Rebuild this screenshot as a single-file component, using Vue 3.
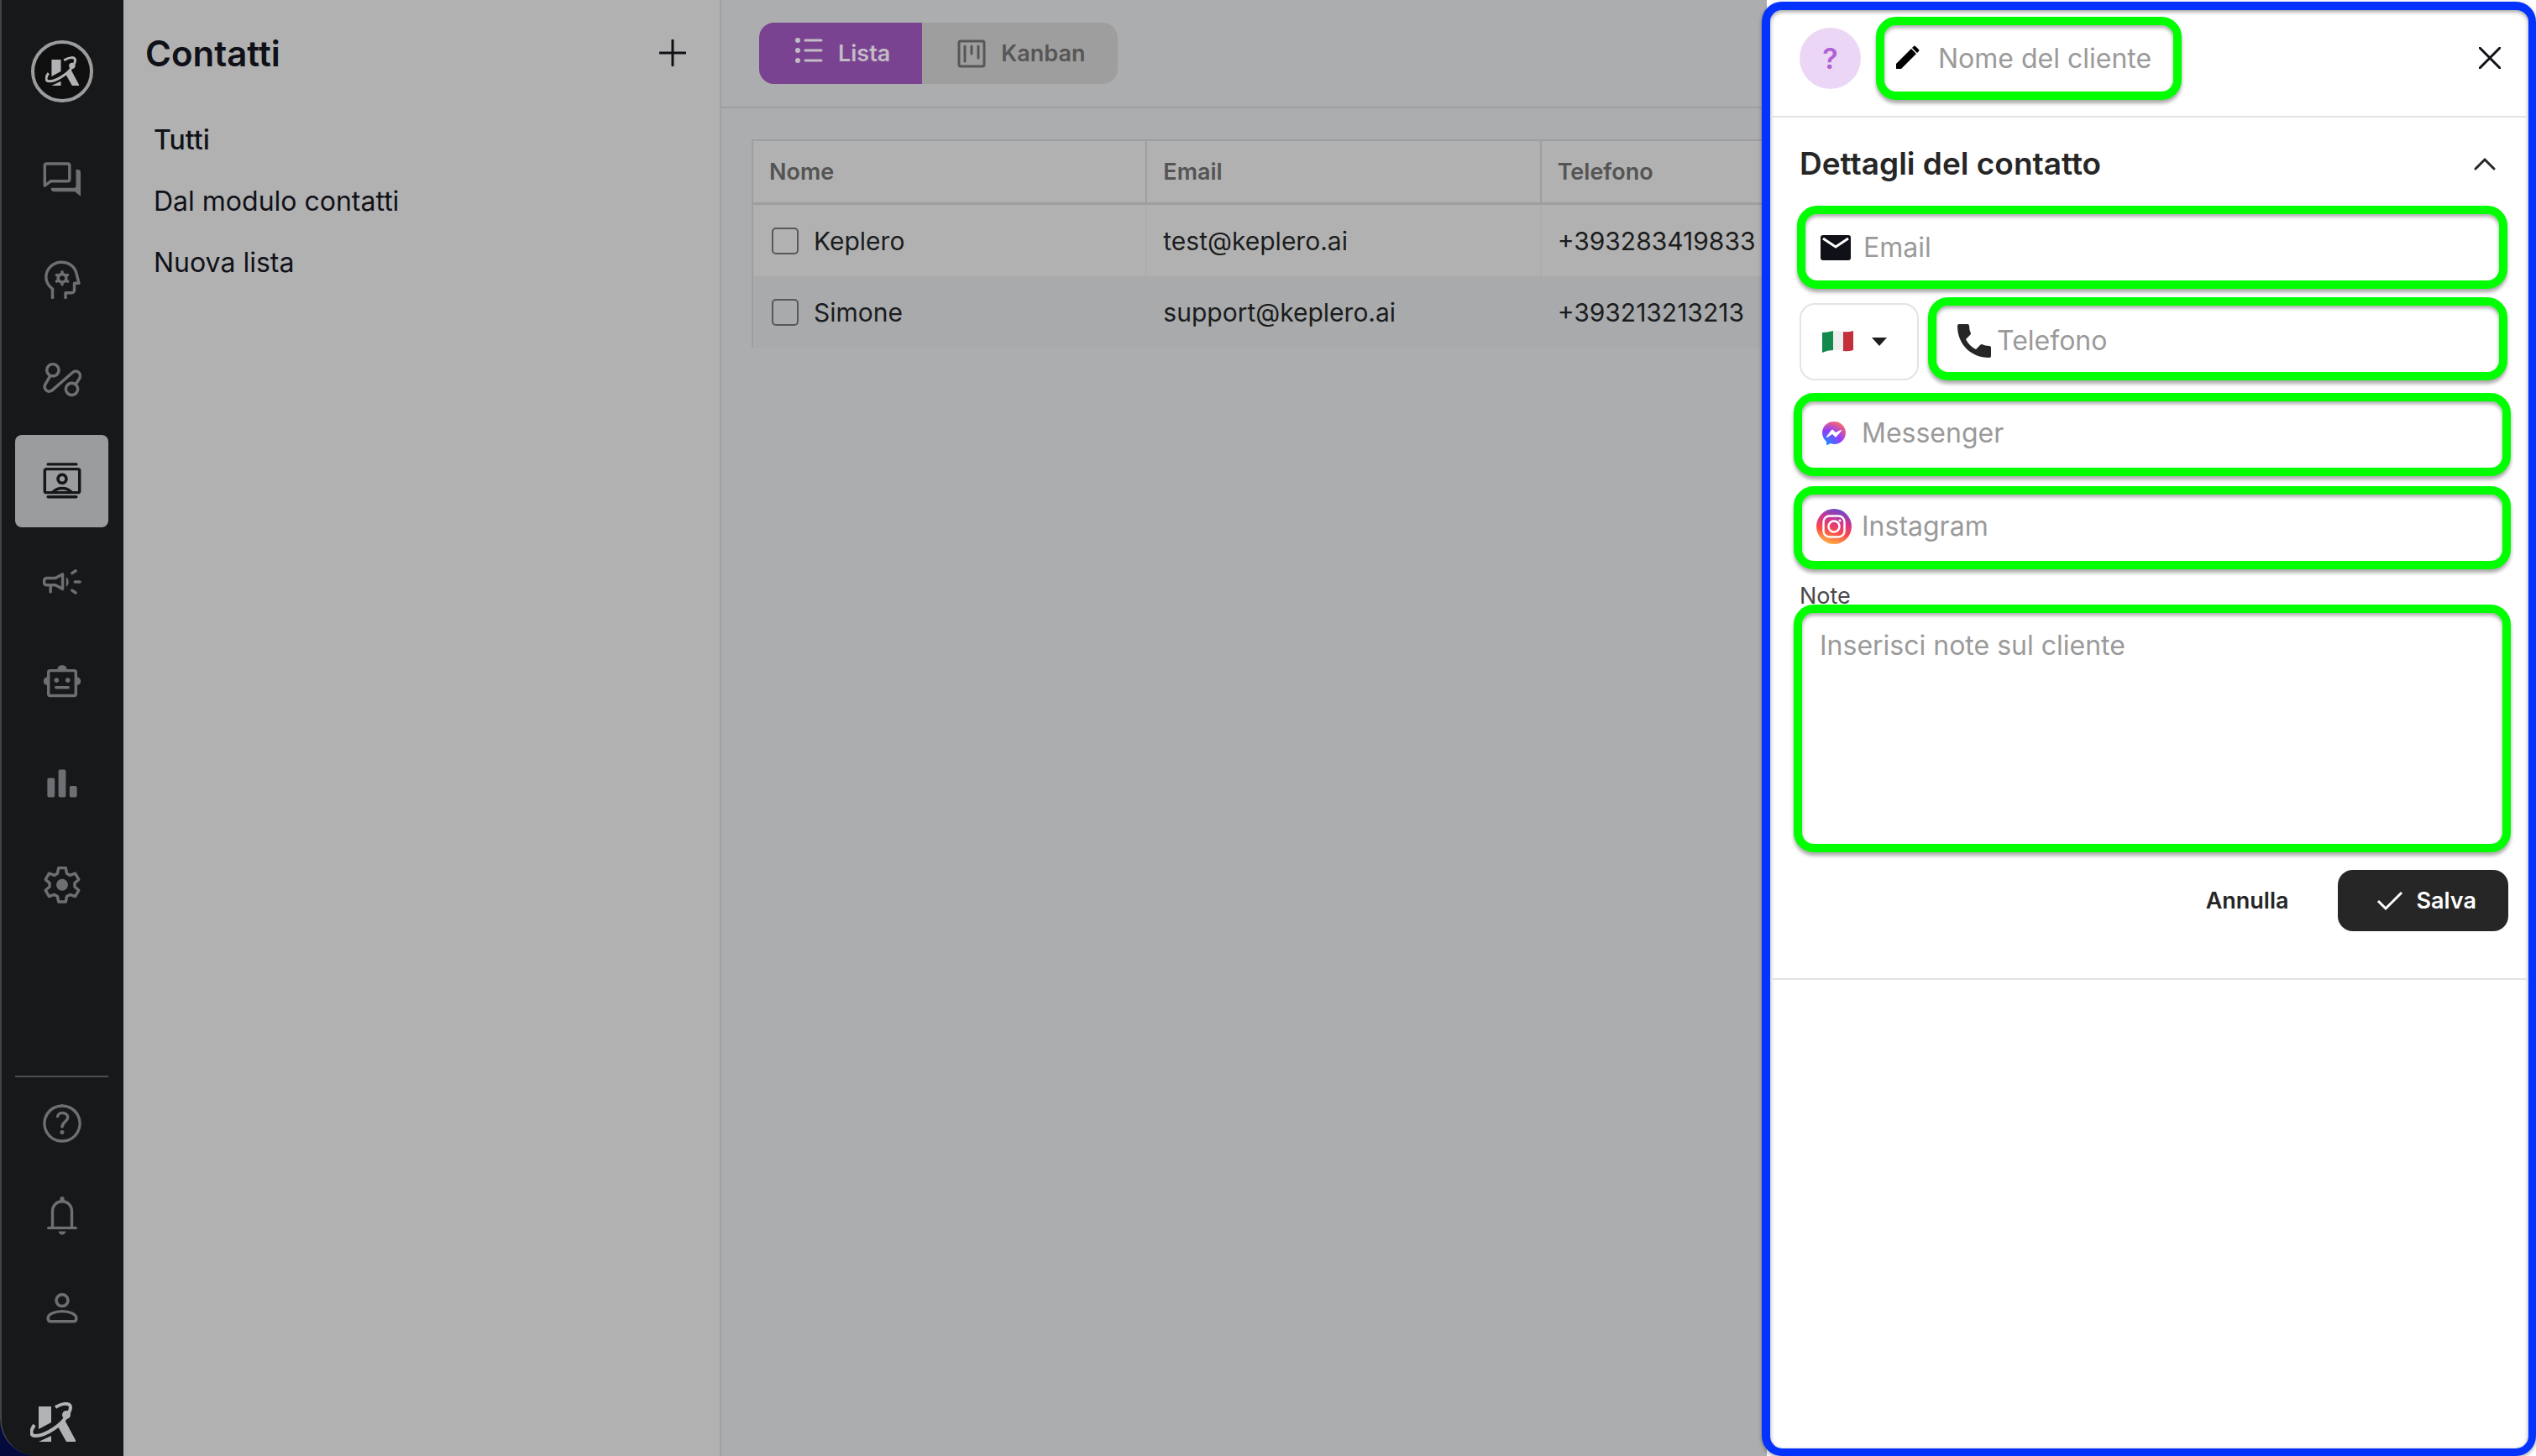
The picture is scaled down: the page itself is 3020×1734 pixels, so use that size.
<script setup>
import { ref } from 'vue';

const view = ref('list');
const country = ref('IT');

const contact = ref({
    name: '',
    email: '',
    phone: '',
    messenger: '',
    instagram: '',
    notes: ''
});

const navItems = [
    { id: 'chat', label: 'Conversazioni' },
    { id: 'brain', label: 'Conoscenza' },
    { id: 'flow', label: 'Flussi' },
    { id: 'contacts', label: 'Contatti', active: true },
    { id: 'campaign', label: 'Campagne' },
    { id: 'robot', label: 'Chatbot' },
    { id: 'chart', label: 'Statistiche' },
    { id: 'settings', label: 'Impostazioni' }
];

const bottomItems = [
    { id: 'help', label: 'Aiuto' },
    { id: 'bell', label: 'Notifiche' },
    { id: 'person', label: 'Profilo' }
];

const lists = ['Tutti', 'Dal modulo contatti', 'Nuova lista'];

const contacts = [
    { name: 'Keplero', email: 'test@keplero.ai', phone: '+393283419833' },
    { name: 'Simone', email: 'support@keplero.ai', phone: '+393213213213' }
];

// 24x24 stroke icons, a filled part is listed under "fill"
const icons = {
    chat: {
        stroke: 'M2.2 2.6h13.4a1 1 0 0 1 1 1v8.800a1 1 0 0 1-1 1H5L1.200 16.200V3.600a1 1 0 0 1 1-1z',
        fill: 'M20.600 6.200h1.200c1 0 1.700.700 1.700 1.700v14.900l-3.600-2.800H7c-1.200 0-2-.8-2-2.400h14.600a1 1 0 0 0 1-1z'
    },
    brain: {
        stroke: 'M6 23.200v-5.400C3.500 15.800 2 13.300 2 10.400 2 5.300 6.200 1.200 11.600 1.200c4.700 0 8.300 2.800 9.300 7l1.500 6h-2.800v4.400a1.600 1.600 0 0 1-1.600 1.600h-3.900v3M12 7.200v1.400M12 13.600v1.400M8.600 9.100l1.200.7M14.200 12.400l1.200.7M8.600 13.100l1.200-.7M14.200 9.800l1.200-.7M12 8.600a2.500 2.500 0 1 0 .01 0'
    },
    flow: {
        stroke: 'M6.200 1.900a3.700 3.700 0 1 0 .01 0M18 13.700a3.700 3.700 0 1 0 .01 0M4.600 9.200l-2.900 5c-1.700 2.800.9 5.900 3.900 4.100L18.700 6.900c2.800-1.900 5.600 1.200 4 4l-2 3.200'
    },
    contacts: {
        stroke: 'M3.200 1.500h17.600M3.200 21.800h17.600M2.200 4.500h19.600a1 1 0 0 1 1 1v12.600a1 1 0 0 1-1 1H2.200a1 1 0 0 1-1-1V5.500a1 1 0 0 1 1-1zM12 8a2.600 2.600 0 1 0 .01 0M6.300 18.800c2.900-3.200 8.500-3.200 11.400 0'
    },
    campaign: {
        stroke: 'M2.300 9.700h5.500l4.500-2.500v9.200l-4.500-2.400H2.300a1.500 1.500 0 0 1-1.500-1.500v-1.300a1.500 1.500 0 0 1 1.500-1.500zM4.800 14.200v4M18.200 6.600l2.200-1.500M20 12h3M18.200 17.300l2.200 1.500',
        fill: 'M14.500 9c2 1 2 5 0 6z'
    },
    robot: {
        stroke: 'M4.500 4.500h15a1 1 0 0 1 1 1v13.600a1 1 0 0 1-1 1h-15a1 1 0 0 1-1-1V5.500a1 1 0 0 1 1-1zM8.200 15h7.600',
        fill: 'M9 4a3 3 0 0 1 6 0zM3 8.500v5.200a2.600 2.600 0 0 1 0-5.200zM21 8.500v5.200a2.600 2.600 0 0 0 0-5.200zM8.500 9a1.500 1.500 0 1 0 .01 0M15.500 9a1.500 1.500 0 1 0 .01 0'
    },
    chart: {
        fill: 'M3.800 8.600h2.600a1 1 0 0 1 1 1v10a1 1 0 0 1-1 1H3.800a1 1 0 0 1-1-1v-10a1 1 0 0 1 1-1zM10.700 3.400h2.600a1 1 0 0 1 1 1v15.200a1 1 0 0 1-1 1h-2.600a1 1 0 0 1-1-1V4.400a1 1 0 0 1 1-1zM17.600 13.600h2.600a1 1 0 0 1 1 1v5a1 1 0 0 1-1 1h-2.600a1 1 0 0 1-1-1v-5a1 1 0 0 1 1-1z'
    },
    settings: {
        stroke: 'M9.800 1.900h4.400l.7 3.400 2 1.200 3.200-1.200 2.200 3.800-2.500 2.200v2.300l2.500 2.200-2.200 3.800-3.200-1.100-2 1.100-.7 3.400H9.800l-.7-3.400-2-1.100-3.200 1.100-2.200-3.800 2.500-2.200v-2.300L1.700 9.100l2.200-3.800 3.200 1.200 2-1.200z',
        fill: 'M12 8.800a3.600 3.600 0 1 0 .01 0'
    },
    help: {
        stroke: 'M12 1a11 11 0 1 0 .01 0M9.200 7.600c.6-3.400 6.600-2.600 6.300.8-.2 2.400-3.300 2.600-3.500 5.600',
        fill: 'M12 16.200a1.300 1.300 0 1 0 .01 0'
    },
    bell: {
        stroke: 'M3.500 19.500h17M6 19V9.300C6 5.600 8.500 3 12 3s6 2.600 6 6.300V19',
        fill: 'M10.600 2.900V1.500c0-2 2.800-2 2.800 0v1.400zM9.700 21.700h4.600c-.5 2.800-4.100 2.800-4.600 0z'
    },
    person: {
        stroke: 'M12 3.500a3.600 3.600 0 1 0 .01 0M5 20.200h14c1.300 0 1.800-.6 1.800-2 0-2.400-4-4.300-8.800-4.300s-8.800 1.900-8.800 4.300c0 1.400.5 2 1.800 2z'
    }
};
</script>

<template>
    <div class="app">
        <nav class="rail" aria-label="Menu principale">
            <a href="#" class="brand" aria-label="Keplero">
                <svg viewBox="0 0 54 48">
                    <path d="M10 5h15v19L10 32zM25 40v7H10zM33 29l8-8 14 26H43z" />
                    <path class="orbit" d="M5 27c-5 7-5 13 1 13 13 0 33-14 39-26M30 6c8-5 18-6 18 0 0 3-1 5-3 8" />
                    <circle cx="43" cy="15" r="5" />
                </svg>
            </a>
            <div class="nav-group">
                <a v-for="item in navItems" :key="item.id" href="#" class="nav-item" :class="{ active: item.active }" :aria-label="item.label">
                    <svg class="icon" viewBox="0 0 24 24">
                        <path v-if="icons[item.id].stroke" class="line" :d="icons[item.id].stroke" />
                        <path v-if="icons[item.id].fill" class="solid" :d="icons[item.id].fill" />
                    </svg>
                </a>
            </div>
            <div class="nav-bottom">
                <a v-for="item in bottomItems" :key="item.id" href="#" class="nav-item" :aria-label="item.label">
                    <svg class="icon" viewBox="0 0 24 24">
                        <path class="line" :d="icons[item.id].stroke" />
                        <path v-if="icons[item.id].fill" class="solid" :d="icons[item.id].fill" />
                    </svg>
                </a>
                <svg class="mark" viewBox="0 0 54 48">
                    <path d="M10 5h15v19L10 32zM25 40v7H10zM33 29l8-8 14 26H43z" />
                    <path class="orbit" d="M5 27c-5 7-5 13 1 13 13 0 33-14 39-26M30 6c8-5 18-6 18 0 0 3-1 5-3 8" />
                    <circle cx="43" cy="15" r="5" />
                </svg>
            </div>
        </nav>

        <section class="lists">
            <header class="lists-head">
                <h1>Contatti</h1>
                <button type="button" class="icon-btn" aria-label="Aggiungi lista">
                    <svg width="32" height="32" viewBox="0 0 32 32"><path d="M16 1v30M1 16h30" /></svg>
                </button>
            </header>
            <a v-for="(list, index) in lists" :key="list" href="#" class="list-link" :class="{ current: index === 0 }">{{ list }}</a>
        </section>

        <main class="content">
            <div class="toolbar">
                <div class="toggle">
                    <button type="button" :class="{ on: view === 'list' }" @click="view = 'list'">
                        <svg class="list-icon" width="34" height="34" viewBox="0 0 34 34">
                            <path d="M13 5h19M13 17h19M13 29h19" />
                            <circle cx="4" cy="5" r="3" />
                            <circle cx="4" cy="17" r="3" />
                            <circle cx="4" cy="29" r="3" />
                        </svg>
                        Lista
                    </button>
                    <button type="button" :class="{ on: view === 'kanban' }" @click="view = 'kanban'">
                        <svg width="34" height="34" viewBox="0 0 34 34">
                            <rect x="2" y="2" width="30" height="30" rx="2" />
                            <path d="M9 8v18M17 8v9M25 8v14" />
                        </svg>
                        Kanban
                    </button>
                </div>
            </div>
            <table class="contacts">
                <thead>
                    <tr>
                        <th>Nome</th>
                        <th>Email</th>
                        <th>Telefono</th>
                    </tr>
                </thead>
                <tbody>
                    <tr v-for="row in contacts" :key="row.email">
                        <td>
                            <label class="pick"><input type="checkbox" />{{ row.name }}</label>
                        </td>
                        <td>{{ row.email }}</td>
                        <td>{{ row.phone }}</td>
                    </tr>
                </tbody>
            </table>
        </main>

        <aside class="drawer">
            <div class="frame">
                <header class="drawer-head">
                    <span class="avatar">?</span>
                    <label class="field name-field">
                        <svg width="30" height="30" viewBox="0 0 30 30">
                            <path d="M2 28v-6L20 4l6 6L8 28zM21 3l2-2q1-1 2 0l4 4q1 1 0 2l-2 2z" />
                        </svg>
                        <input v-model="contact.name" type="text" placeholder="Nome del cliente" aria-label="Nome del cliente" />
                    </label>
                    <button type="button" class="icon-btn close" aria-label="Chiudi">
                        <svg width="26" height="26" viewBox="0 0 26 26"><path d="M1 1l24 24M25 1L1 25" /></svg>
                    </button>
                </header>

                <form class="details" @submit.prevent>
                    <div class="details-head">
                        <h2>Dettagli del contatto</h2>
                        <button type="button" class="icon-btn" aria-label="Comprimi">
                            <svg width="26" height="16" viewBox="0 0 26 16"><path d="M2 14L13 3l11 11" /></svg>
                        </button>
                    </div>

                    <label class="field inset">
                        <svg width="42" height="42" viewBox="0 0 42 42">
                            <rect x="3" y="6" width="36" height="30" rx="3" fill="#101118" />
                            <path d="M6 10l15 10 15-10" fill="none" stroke="#ffffff" stroke-width="3" />
                        </svg>
                        <input v-model="contact.email" type="email" placeholder="Email" aria-label="Email" />
                    </label>

                    <div class="phone-row">
                        <div class="country">
                            <svg width="38" height="28" viewBox="0 0 38 28">
                                <path fill="#128a4b" d="M0 3q6 0 13-2v23q-7 0-13 3z" />
                                <path fill="#eeeeee" d="M13 1q6-1 12 1v23q-6-2-12-1z" />
                                <path fill="#c32f3b" d="M25 2q6 1 12-1v23q-6 2-12 1z" />
                            </svg>
                            <svg width="20" height="10" viewBox="0 0 20 10"><path fill="#1d1d1d" d="M1 0h18l-9 10z" /></svg>
                            <select v-model="country" aria-label="Prefisso">
                                <option value="IT">Italia +39</option>
                            </select>
                        </div>
                        <label class="field phone">
                            <svg width="42" height="42" viewBox="0 0 42 42">
                                <path fill="#262626" d="M3 1h10q2 0 2 2 0 5 2 9 0 1-1 2l-5 5q4 8 12 12l5-5q1-1 2-1 4 2 9 2 2 0 2 2v10q0 2-2 2C17 41 1 25 1 3q0-2 2-2z" />
                            </svg>
                            <input v-model="contact.phone" type="tel" placeholder="Telefono" aria-label="Telefono" />
                        </label>
                    </div>

                    <label class="field social">
                        <svg width="42" height="42" viewBox="0 0 42 42">
                            <defs>
                                <radialGradient id="messenger" cx="0.2" cy="1" r="1.1">
                                    <stop offset="0" stop-color="#1292ff" />
                                    <stop offset="0.55" stop-color="#8f3dff" />
                                    <stop offset="1" stop-color="#ff6a68" />
                                </radialGradient>
                            </defs>
                            <path fill="url(#messenger)" d="M21 7c8 0 14 6 14 13.500S29 34 21 34q-2 0-4-1l-4 2q-1 0-1-1v-3c-3-3-5-6-5-10.500C7 13 13 7 21 7z" />
                            <path fill="#ffffff" d="M12 25l6-8q1-1 2 0l3 3 6-3q1 0 1 1l-6 7q-1 1-2 0l-3-3-6 4q-1 0-1-1z" />
                        </svg>
                        <input v-model="contact.messenger" type="text" placeholder="Messenger" aria-label="Messenger" />
                    </label>

                    <label class="field social">
                        <svg width="42" height="42" viewBox="0 0 42 42">
                            <defs>
                                <linearGradient id="instagram" x1="0.35" y1="1" x2="0.65" y2="0">
                                    <stop offset="0" stop-color="#ffb545" />
                                    <stop offset="0.35" stop-color="#fb4a48" />
                                    <stop offset="0.65" stop-color="#d6348c" />
                                    <stop offset="1" stop-color="#6449cf" />
                                </linearGradient>
                            </defs>
                            <circle cx="21" cy="21" r="21" fill="url(#instagram)" />
                            <g fill="none" stroke="#ffffff" stroke-width="2.5">
                                <rect x="8.5" y="8.5" width="25" height="25" rx="7" />
                                <circle cx="21" cy="21" r="6.5" />
                            </g>
                            <circle cx="28" cy="14" r="1.6" fill="#ffffff" />
                        </svg>
                        <input v-model="contact.instagram" type="text" placeholder="Instagram" aria-label="Instagram" />
                    </label>

                    <div class="notes">
                        <label for="notes">Note</label>
                        <textarea id="notes" v-model="contact.notes" placeholder="Inserisci note sul cliente"></textarea>
                    </div>

                    <div class="actions">
                        <button type="button" class="cancel">Annulla</button>
                        <button type="submit" class="save">
                            <svg width="32" height="24" viewBox="0 0 32 24"><path d="M2 12l9 9L30 2" /></svg>
                            Salva
                        </button>
                    </div>
                </form>
            </div>
        </aside>
    </div>
</template>

<style>
body {
    background: #030a3c;
}
</style>

<style scoped>
* {
    box-sizing: border-box;
}

.app {
    position: relative;
    display: flex;
    min-height: 100vh;
    overflow: hidden;
    border-left: 2px solid #414344;
    border-bottom-left-radius: 44px;
    font-family: Inter, "Liberation Sans", sans-serif;
    font-size: 32px;
    color: #101118;
}

button,
input,
select,
textarea {
    font: inherit;
    color: inherit;
    background: none;
    border: 0;
    margin: 0;
    padding: 0;
}

button {
    cursor: pointer;
}

a {
    color: inherit;
    text-decoration: none;
}

svg {
    flex: none;
}

h1,
h2 {
    margin: 0;
    font-weight: 600;
}

/* left rail */
.rail {
    flex: none;
    display: flex;
    flex-direction: column;
    width: 145px;
    padding: 48px 18px 10px 16px;
    background: #16181a;
    color: #6d7073;
}

.brand {
    display: flex;
    align-items: center;
    justify-content: center;
    width: 74px;
    height: 74px;
    margin: 0 auto;
    border: 4px solid #9b9c9e;
    border-radius: 50%;
    background: #0f0f0f;
}

.brand svg {
    width: 40px;
    height: 36px;
}

.brand svg,
.mark {
    fill: #b2b3b5;
}

.orbit {
    fill: none;
    stroke: #b2b3b5;
    stroke-width: 4;
}

.nav-group {
    display: flex;
    flex-direction: column;
    gap: 10px;
    margin-top: 36px;
}

.nav-item {
    display: flex;
    align-items: center;
    justify-content: center;
    height: 110px;
    border-radius: 8px;
}

.nav-item.active {
    background: #9b9c9e;
    color: #151719;
}

.icon {
    width: 46px;
    height: 46px;
}

.line {
    fill: none;
    stroke: currentColor;
    stroke-width: 1.8;
    stroke-linecap: round;
    stroke-linejoin: round;
}

.solid {
    fill: currentColor;
}

.nav-bottom {
    margin-top: auto;
    border-top: 2px solid #4b4e55;
}

.mark {
    display: block;
    width: 54px;
    height: 48px;
    margin: 57px 0 6px 18px;
}

/* saved lists */
.lists {
    flex: none;
    width: 712px;
    padding: 30px 40px 30px 36px;
    background: #b1b1b1;
    border-right: 2px solid #9fa1a3;
}

.lists-head {
    display: flex;
    align-items: center;
    justify-content: space-between;
    height: 66px;
    margin: 0 0 34px -10px;
}

h1 {
    font-size: 42px;
}

.icon-btn {
    display: flex;
}

.icon-btn path {
    fill: none;
    stroke: currentColor;
    stroke-width: 3;
    stroke-linecap: round;
}

.list-link {
    display: block;
    height: 73px;
    line-height: 73px;
}

.list-link.current {
    font-weight: 500;
}

/* list of contacts */
.content {
    flex: 1;
    min-width: 0;
    background: #abadaf;
}

.toolbar {
    height: 129px;
    padding: 27px 45px;
    border-bottom: 2px solid #9d9fa0;
}

.toggle {
    display: inline-flex;
    overflow: hidden;
    border-radius: 18px;
    background: #9e9e9e;
    color: #565656;
    font-size: 27px;
    font-weight: 600;
}

.toggle button {
    display: flex;
    align-items: center;
    gap: 18px;
    height: 73px;
    padding: 0 38px 0 42px;
}

.toggle .on {
    background: #7a4391;
    color: #c2bcc5;
}

.toggle svg {
    fill: none;
    stroke: currentColor;
    stroke-width: 3;
    stroke-linecap: round;
}

.toggle circle {
    fill: currentColor;
    stroke: none;
}

.toggle .list-icon {
    margin-bottom: 8px;
}

.contacts {
    width: 1412px;
    margin: 37px 0 0 36px;
    table-layout: fixed;
    border-collapse: separate;
    border-spacing: 0;
    border: 2px solid #9d9e9f;
    border-bottom: 0;
}

.contacts th {
    height: 76px;
    padding: 0 19px;
    background: #b1b1b1;
    border-right: 2px solid #9d9e9f;
    border-bottom: 3px solid #9d9e9f;
    color: #545454;
    font-size: 27px;
    font-weight: 600;
    text-align: left;
}

.contacts td {
    height: 85px;
    padding: 0 19px;
    background: #b1b1b1;
    border-right: 2px solid #acacad;
    color: #1b1c1d;
    font-size: 30px;
}

.contacts tr:nth-child(even) td {
    background: #a8aaab;
    border-color: #a8aaab;
}

.pick {
    display: flex;
    align-items: center;
    gap: 18px;
}

.pick input {
    appearance: none;
    width: 32px;
    height: 32px;
    margin-left: 3px;
    border: 2px solid #585858;
    border-radius: 5px;
}

/* contact drawer, opened over the table */
.drawer {
    position: absolute;
    inset: 0 0 0 auto;
    width: 916px;
    background: #ffffff;
}

.frame {
    height: calc(100% - 2px);
    margin: 2px 0 0 -6px;
    border: 10px solid #0433ff;
    border-bottom-width: 9px;
    border-right-width: 9px;
    border-radius: 24px;
    background: #ffffff;
    box-shadow: 0 2px 5px #00000055, inset 0 2px 5px #00000066;
}

.drawer-head {
    display: flex;
    align-items: center;
    height: 128px;
    padding: 0 33px 12px 35px;
    border-bottom: 2px solid #e2e2e2;
}

.avatar {
    display: flex;
    align-items: center;
    justify-content: center;
    width: 73px;
    height: 73px;
    margin-right: 18px;
    border-radius: 50%;
    background: #ebd7f5;
    color: #b061d6;
    font-size: 34px;
    font-weight: 600;
}

.field,
textarea {
    border: 10px solid #00ff00;
    border-radius: 24px;
    background: #ffffff;
    box-shadow: 0 4px 4px #00000055, inset 0 3px 4px #00000055;
}

.field {
    display: flex;
    align-items: center;
    gap: 12px;
    height: 99px;
    padding: 0 17px;
}

.field input {
    flex: 1;
    min-width: 0;
    outline: none;
}

::placeholder {
    color: #9a9a9a;
    opacity: 1;
}

.name-field {
    gap: 22px;
    width: 364px;
    padding: 0 12px;
}

.close {
    margin-left: auto;
}

.details {
    display: flex;
    flex-direction: column;
    padding: 0 21px 56px 28px;
    border-bottom: 2px solid #e2e2e2;
}

.details-head {
    display: flex;
    align-items: center;
    justify-content: space-between;
    height: 105px;
    padding: 4px 18px 0 7px;
    color: #262626;
}

h2 {
    font-size: 37px;
}

.inset {
    margin: 0 4px;
    padding: 0 13px 0 15px;
}

.phone-row {
    display: flex;
    align-items: flex-end;
    gap: 11px;
    margin: 10px 4px 15px 7px;
}

.country {
    position: relative;
    display: flex;
    align-items: center;
    gap: 20px;
    width: 142px;
    height: 92px;
    padding-left: 25px;
    border: 2px solid #e4e4e4;
    border-radius: 18px;
}

.country select {
    position: absolute;
    inset: 0;
    width: 100%;
    opacity: 0;
}

.phone {
    flex: 1;
    gap: 6px;
    padding: 4px 24px 0;
}

.social {
    padding-bottom: 4px;
}

.social + .social {
    margin-top: 12px;
}

.notes {
    display: flex;
    flex-direction: column;
    margin-top: 16px;
    font-size: 27px;
    line-height: 32px;
    color: #4a4a4a;
}

.notes label {
    height: 26px;
    padding-left: 7px;
}

textarea {
    position: relative;
    height: 295px;
    padding: 23px 21px;
    font-size: 32px;
    line-height: 32px;
    resize: none;
    outline: none;
}

.actions {
    display: flex;
    justify-content: flex-end;
    gap: 20px;
    margin: 21px 3px 0;
    font-size: 27px;
    font-weight: 600;
}

.actions button {
    display: flex;
    align-items: center;
    height: 73px;
    padding: 0 38px;
    border-radius: 18px;
}

.cancel {
    color: #262626;
}

.actions .save {
    gap: 16px;
    padding: 0 38px 0 46px;
    background: #262626;
    color: #ffffff;
}

.save path {
    fill: none;
    stroke: currentColor;
    stroke-width: 3;
}
</style>
